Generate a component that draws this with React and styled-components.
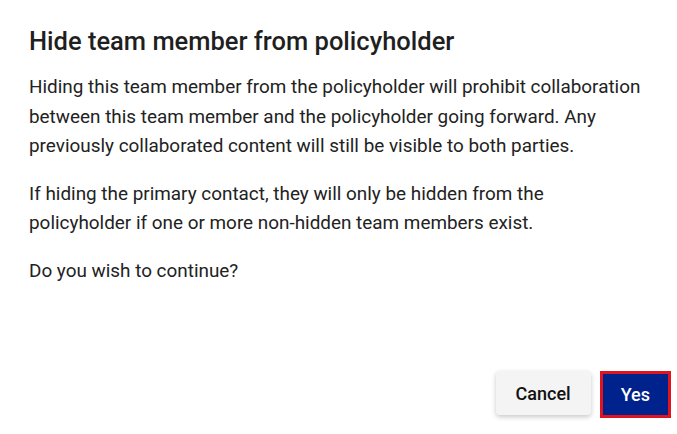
import React from "react";
import styled, { createGlobalStyle } from "styled-components";

const GlobalStyle = createGlobalStyle`
  html, body {
    margin: 0;
    padding: 0;
    background: #ffffff;
  }
  body {
    font-family: Roboto, "Liberation Sans", sans-serif;
  }
`;

const App = () => {
  return (
    <>
      <GlobalStyle />
      <StyledDialog>
        <StyledTitle>Hide team member from policyholder</StyledTitle>
        <StyledBody>
          <StyledParagraph>
            Hiding this team member from the policyholder will prohibit
            collaboration between this team member and the policyholder going
            forward. Any previously collaborated content will still be visible
            to both parties.
          </StyledParagraph>
          <StyledParagraph>
            If hiding the primary contact, they will only be hidden from the
            policyholder if one or more non-hidden team members exist.
          </StyledParagraph>
          <StyledParagraph>Do you wish to continue?</StyledParagraph>
        </StyledBody>
        <StyledFooter>
          <StyledButton>Cancel</StyledButton>
          <StyledButton primary>Yes</StyledButton>
        </StyledFooter>
      </StyledDialog>
    </>
  );
};

const StyledDialog = styled.div`
  box-sizing: border-box;
  height: 434px;
  display: flex;
  flex-direction: column;
  padding: 26px 6px 16px 29px;
  color: #212121;
`;
const StyledTitle = styled.h2`
  margin: 0 0 16px;
  font-size: 25.5px;
  line-height: 30px;
  font-weight: 500;
  color: #1f1f1f;
`;
const StyledBody = styled.div`
  display: flex;
  flex-direction: column;
  gap: 18px;
  padding-right: 23px;
`;
const StyledParagraph = styled.p`
  margin: 0;
  font-size: 18.9px;
  line-height: 29.5px;
  color: #222222;
`;
const StyledFooter = styled.div`
  margin-top: auto;
  display: flex;
  justify-content: flex-end;
  align-items: flex-start;
  gap: 9px;
`;
const StyledButton = styled.button`
  box-sizing: border-box;
  font-family: Roboto, "Liberation Sans", sans-serif;
  font-size: 18px;
  font-weight: 500;
  cursor: pointer;
  height: ${(p) => (p.primary ? "47px" : "44px")};
  padding: ${(p) => (p.primary ? "0 18px" : "0 20px")};
  border-radius: ${(p) => (p.primary ? "0" : "4px")};
  border: ${(p) => (p.primary ? "3px solid #e0141e" : "none")};
  background: ${(p) => (p.primary ? "#00228c" : "#f4f4f4")};
  color: ${(p) => (p.primary ? "#ffffff" : "#111111")};
  box-shadow: ${(p) =>
    p.primary ? "none" : "0 2px 5px rgba(0, 0, 0, 0.22)"};
`;

export default App;
